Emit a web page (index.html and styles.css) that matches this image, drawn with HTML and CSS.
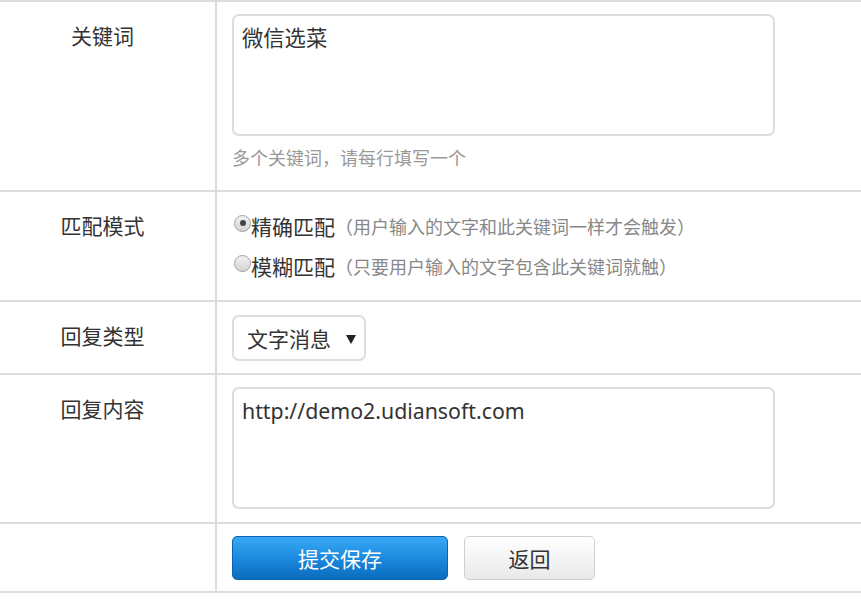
FILE: index.html
```html
<!DOCTYPE html>
<html lang="zh-CN">
<head>
<meta charset="utf-8">
<title>关键词回复</title>
<link rel="stylesheet" href="styles.css">
</head>
<body>
<div class="form">
  <div class="row">
    <div class="label">关键词</div>
    <div class="field field-kw">
      <textarea class="area">微信选菜</textarea>
      <div class="hint">多个关键词，请每行填写一个</div>
    </div>
  </div>
  <div class="row">
    <div class="label">匹配模式</div>
    <div class="field field-radio">
      <div class="opt"><span class="radio checked"></span><span class="opt-text">精确匹配</span><span class="opt-note">（用户输入的文字和此关键词一样才会触发）</span></div>
      <div class="opt"><span class="radio"></span><span class="opt-text">模糊匹配</span><span class="opt-note">（只要用户输入的文字包含此关键词就触）</span></div>
    </div>
  </div>
  <div class="row">
    <div class="label">回复类型</div>
    <div class="field field-select">
      <div class="select"><span>文字消息</span><svg class="caret" width="10" height="9" viewBox="0 0 10 9"><path d="M0 0H10L5 9Z" fill="#222"/></svg></div>
    </div>
  </div>
  <div class="row">
    <div class="label">回复内容</div>
    <div class="field field-content">
      <textarea class="area">http://demo2.udiansoft.com</textarea>
    </div>
  </div>
  <div class="row">
    <div class="label"></div>
    <div class="field field-btns">
      <button class="btn btn-primary">提交保存</button>
      <button class="btn btn-default">返回</button>
    </div>
  </div>
</div>
</body>
</html>
```

FILE: styles.css
```css
* { box-sizing: border-box; }
html, body {
  margin: 0;
  padding: 0;
  background: #fff;
}
body {
  font-family: "Noto Sans", "Noto Sans CJK SC", sans-serif;
  color: #333;
  font-size: 21px;
}
.form {
  border-top: 2px solid #dddddd;
}
.row {
  display: grid;
  grid-template-columns: 217px 1fr;
  border-bottom: 2px solid #dddddd;
}
.label {
  border-right: 2px solid #dddddd;
  text-align: center;
  padding-top: 19px;
  padding-right: 10px;
  line-height: 30px;
  font-size: 21px;
  color: #333;
}
.field {
  padding: 12px 15px 13px 15px;
}
.area {
  display: block;
  width: 543px;
  height: 122px;
  border: 2px solid #dddddd;
  border-radius: 7px;
  padding: 7px 8px 6px;
  font-family: "Noto Sans", "Noto Sans CJK SC", sans-serif;
  font-size: 21.3px;
  line-height: 30px;
  color: #333;
  resize: none;
  outline: none;
  margin: 0;
  background: #fff;
}
.field-kw {
  padding-bottom: 20px;
}
.hint {
  margin-top: 10px;
  line-height: 24px;
  font-size: 18px;
  color: #999;
}
.field-radio {
  padding-top: 14px;
  padding-bottom: 14px;
}
.opt {
  display: flex;
  align-items: center;
  height: 40px;
  white-space: nowrap;
}
.radio {
  width: 17px;
  height: 17px;
  margin: -6px 0 0 2px;
  border-radius: 50%;
  border: 1px solid #a0a0a0;
  background: linear-gradient(#f2f2f2, #d4d4d4);
  position: relative;
  flex: none;
}
.radio.checked::after {
  content: "";
  position: absolute;
  left: 4.5px;
  top: 4.5px;
  width: 6px;
  height: 6px;
  border-radius: 50%;
  background: #444;
}
.opt-text {
  font-size: 21px;
  color: #333;
}
.opt-note {
  font-size: 18px;
  color: #888;
}
.field-select {
  padding-top: 13px;
  padding-bottom: 12px;
}
.select {
  width: 134px;
  height: 46px;
  border: 2px solid #dddddd;
  border-radius: 7px;
  display: flex;
  align-items: center;
  justify-content: space-between;
  padding: 0 8px 0 13px;
  font-size: 21px;
  color: #333;
}
.caret {
  display: block;
  margin-top: 2px;
}
.field-btns {
  display: flex;
  gap: 16px;
  padding-bottom: 11px;
}
.btn {
  height: 44px;
  border-radius: 5px;
  font-family: "Noto Sans", "Noto Sans CJK SC", sans-serif;
  font-size: 21px;
  padding: 0;
  margin: 0;
  cursor: pointer;
}
.btn-primary {
  width: 216px;
  color: #fff;
  border: 1px solid #0a64ae;
  background: linear-gradient(#38a9f6, #1a87dc 55%, #0a6cbd);
}
.btn-default {
  width: 131px;
  color: #333;
  border: 1px solid #cfcfcf;
  background: linear-gradient(#ffffff, #e9e9e9);
}
```
